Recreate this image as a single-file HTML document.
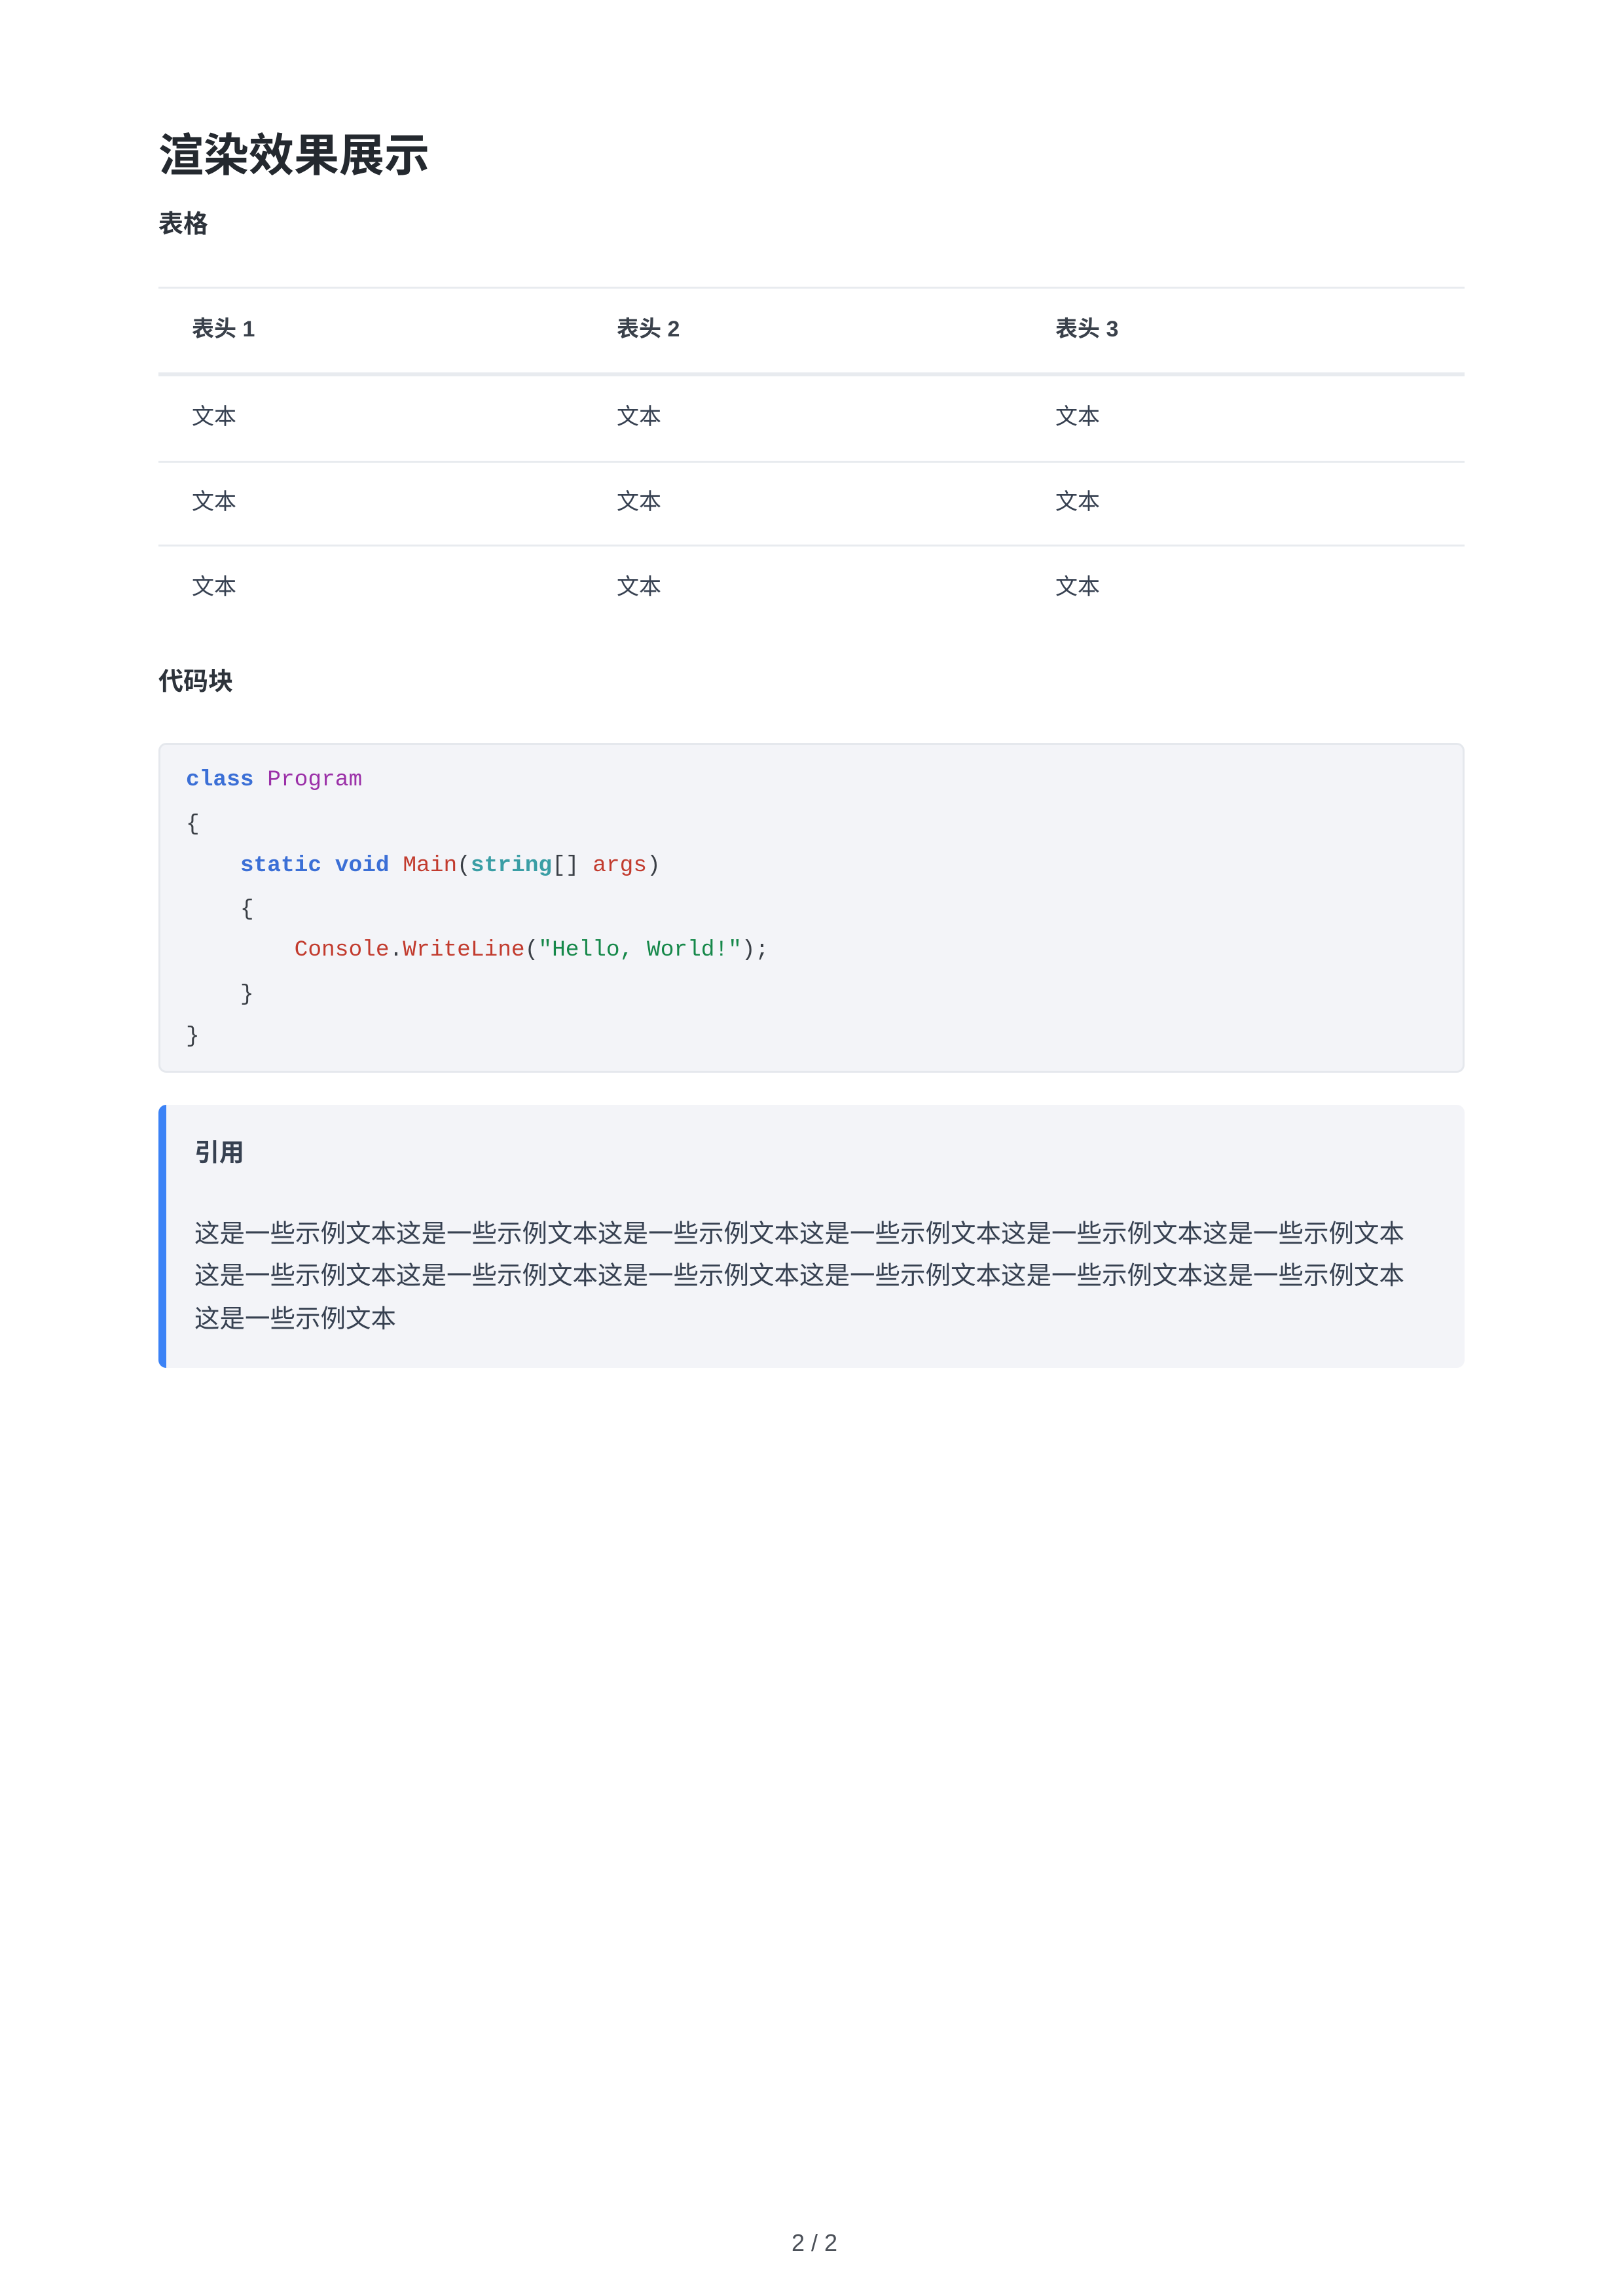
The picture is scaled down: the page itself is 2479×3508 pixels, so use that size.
<!DOCTYPE html>
<html><head><meta charset="utf-8"><style>
*{margin:0;padding:0;box-sizing:border-box}
body{width:2479px;height:3508px;background:#fff;position:relative;font-family:"Liberation Sans","Noto Sans CJK SC",sans-serif;color:#374151;overflow:hidden}
.a{position:absolute;white-space:nowrap;line-height:1}
.h{font-weight:bold;color:#2d333b}
.line{position:absolute;left:242px;width:1995px;background:#e8ebef}
.code{position:absolute;left:242px;top:1135px;width:1995px;height:504px;background:#f3f4f8;border:3px solid #e5e8ed;border-radius:12px}
.cl{position:absolute;left:284px;font-family:"Liberation Mono",monospace;font-size:34.5px;white-space:pre;line-height:1;color:#3a3f46}
.k{color:#3b6fd6;font-weight:bold}.p{color:#9b30a8}.r{color:#c23b2e}.t{color:#3a9ea5;font-weight:bold}.s{color:#16884a}
.quote{position:absolute;left:242px;top:1688px;width:1995px;height:402px;background:#f3f4f8;border-radius:12px;border-left:12px solid #3b82f6}
</style></head><body>
<div class="a h" style="left:242px;top:203px;font-size:69px;color:#24292f">渲染效果展示</div>
<div class="a h" style="left:242px;top:324px;font-size:38px">表格</div>

<div class="line" style="top:438px;height:3px"></div>
<div class="a h" style="left:293px;top:486px;font-size:34px;color:#3a414b">表头 1</div>
<div class="a h" style="left:942px;top:486px;font-size:34px;color:#3a414b">表头 2</div>
<div class="a h" style="left:1612px;top:486px;font-size:34px;color:#3a414b">表头 3</div>
<div class="line" style="top:569px;height:6px"></div>
<div class="a" style="left:293px;top:620px;font-size:34px">文本</div>
<div class="a" style="left:942px;top:620px;font-size:34px">文本</div>
<div class="a" style="left:1612px;top:620px;font-size:34px">文本</div>
<div class="line" style="top:704px;height:3px"></div>
<div class="a" style="left:293px;top:750px;font-size:34px">文本</div>
<div class="a" style="left:942px;top:750px;font-size:34px">文本</div>
<div class="a" style="left:1612px;top:750px;font-size:34px">文本</div>
<div class="line" style="top:832px;height:3px"></div>
<div class="a" style="left:293px;top:880px;font-size:34px">文本</div>
<div class="a" style="left:942px;top:880px;font-size:34px">文本</div>
<div class="a" style="left:1612px;top:880px;font-size:34px">文本</div>

<div class="a h" style="left:242px;top:1023px;font-size:38px">代码块</div>

<div class="code"></div>
<div class="cl" style="top:1175px"><span class="k">class</span> <span class="p">Program</span></div>
<div class="cl" style="top:1243px">{</div>
<div class="cl" style="top:1306px">    <span class="k">static</span> <span class="k">void</span> <span class="r">Main</span>(<span class="t">string</span>[] <span class="r">args</span>)</div>
<div class="cl" style="top:1373px">    {</div>
<div class="cl" style="top:1435px">        <span class="r">Console</span>.<span class="r">WriteLine</span>(<span class="s">"Hello, World!"</span>);</div>
<div class="cl" style="top:1503px">    }</div>
<div class="cl" style="top:1567px">}</div>

<div class="quote"></div>
<div class="a h" style="left:297px;top:1743px;font-size:38px;color:#374151">引用</div>
<div class="a" style="left:297px;top:1867px;font-size:38.5px">这是一些示例文本这是一些示例文本这是一些示例文本这是一些示例文本这是一些示例文本这是一些示例文本</div>
<div class="a" style="left:297px;top:1931px;font-size:38.5px">这是一些示例文本这是一些示例文本这是一些示例文本这是一些示例文本这是一些示例文本这是一些示例文本</div>
<div class="a" style="left:297px;top:1997px;font-size:38.5px">这是一些示例文本</div>

<div class="a" style="left:1244px;top:3409px;font-size:36px;transform:translateX(-50%);color:#4b5058">2 / 2</div>
</body></html>
